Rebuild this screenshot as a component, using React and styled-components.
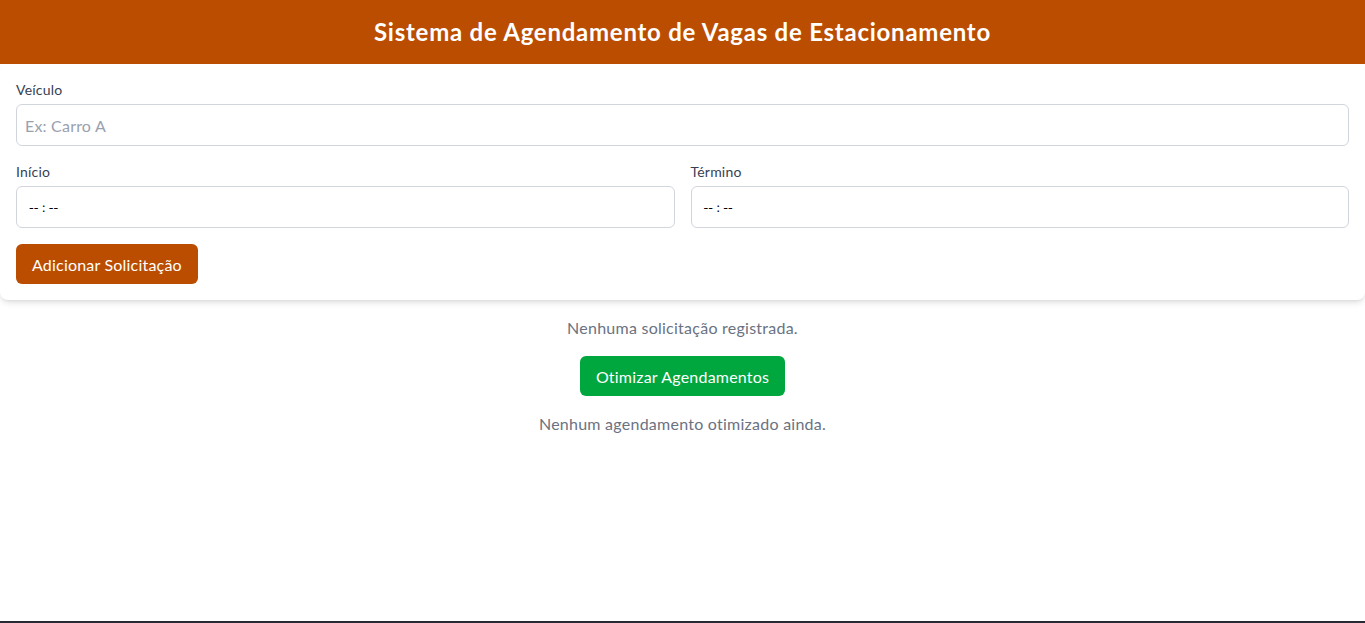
import React, { useState } from "react";
import styled, { createGlobalStyle } from "styled-components";

const GlobalStyle = createGlobalStyle`
  * { box-sizing: border-box; }
  body {
    margin: 0;
    background: #ffffff;
    font-family: Lato, "Noto Sans", sans-serif;
    color: #1e2939;
  }
`;

const Page = styled.div`
  min-height: calc(100vh - 2px);
  display: flex;
  flex-direction: column;
`;

const Header = styled.header`
  background: #bb4d00;
  color: #ffffff;
  text-align: center;
  padding: 16px;
  font-size: 24px;
  line-height: 32px;
  font-weight: 700;
  letter-spacing: 0.75px;
`;

const Card = styled.form`
  background: #ffffff;
  border-radius: 8px;
  box-shadow: 0 4px 6px -1px rgba(0, 0, 0, 0.1), 0 2px 4px -2px rgba(0, 0, 0, 0.1);
  padding: 16px;
  display: flex;
  flex-direction: column;
  gap: 16px;
`;

const Row = styled.div`
  display: grid;
  grid-template-columns: 1fr 1fr;
  gap: 16px;
`;

const Field = styled.div`
  display: flex;
  flex-direction: column;
`;

const Label = styled.label`
  font-size: 14px;
  line-height: 20px;
  color: #364153;
  margin-bottom: 4px;
  letter-spacing: 0.2px;
`;

const Input = styled.input`
  width: 100%;
  height: 42px;
  padding: 8px;
  border: 1px solid #d1d5dc;
  border-radius: 6px;
  font-family: inherit;
  font-size: 16px;
  letter-spacing: 0.2px;
  color: #1e2939;
  outline: none;
  &::placeholder { color: #99a1af; }
`;

const TimeInput = styled(Input)`
  padding: 8px 11px;
  font-family: "DejaVu Sans", sans-serif;
  font-size: 13px;
  letter-spacing: 0;
  color: #000000;
  &::-webkit-calendar-picker-indicator { display: none; }
  &::-webkit-datetime-edit-ampm-field { display: none; }
  &::-webkit-datetime-edit-text { padding: 0 2px; }
`;

const Button = styled.button`
  align-self: ${(p) => (p.$center ? "center" : "flex-start")};
  background: ${(p) => p.$bg};
  color: #ffffff;
  border: none;
  border-radius: 6px;
  height: 40px;
  padding: 0 16px;
  font-family: inherit;
  font-size: 16px;
  letter-spacing: 0.2px;
  cursor: pointer;
`;

const Results = styled.section`
  display: flex;
  flex-direction: column;
  align-items: center;
  gap: 16px;
  padding-top: 16px;
`;

const Muted = styled.p`
  margin: 0;
  font-size: 16px;
  line-height: 24px;
  letter-spacing: 0.25px;
  color: #6a7282;
`;

const Footer = styled.footer`
  height: 2px;
  background: #262a35;
`;

export default function App() {
  const [form, setForm] = useState({ veiculo: "", inicio: "", termino: "" });
  const handleChange = (e) => {
    const { id, value } = e.target;
    setForm((prev) => ({ ...prev, [id]: value }));
  };

  return (
    <>
      <GlobalStyle />
      <Page>
        <Header>Sistema de Agendamento de Vagas de Estacionamento</Header>
        <Card onSubmit={(e) => e.preventDefault()}>
          <Field>
            <Label htmlFor="veiculo">Veículo</Label>
            <Input id="veiculo" placeholder="Ex: Carro A" value={form.veiculo} onChange={handleChange} />
          </Field>
          <Row>
            <Field>
              <Label htmlFor="inicio">Início</Label>
              <TimeInput id="inicio" type="time" value={form.inicio} onChange={handleChange} />
            </Field>
            <Field>
              <Label htmlFor="termino">Término</Label>
              <TimeInput id="termino" type="time" value={form.termino} onChange={handleChange} />
            </Field>
          </Row>
          <Button type="submit" $bg="#bb4d00">Adicionar Solicitação</Button>
        </Card>
        <Results>
          <Muted>Nenhuma solicitação registrada.</Muted>
          <Button type="button" $bg="#00a63e" $center>Otimizar Agendamentos</Button>
          <Muted>Nenhum agendamento otimizado ainda.</Muted>
        </Results>
      </Page>
      <Footer />
    </>
  );
}
